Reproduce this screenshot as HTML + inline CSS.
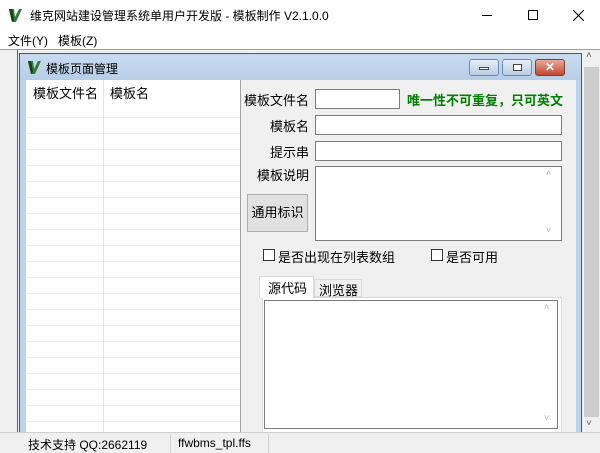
<!DOCTYPE html>
<html><head><meta charset="utf-8"><style>
*{margin:0;padding:0;box-sizing:border-box}
body{width:600px;height:453px;overflow:hidden;background:#fff;font-family:"Liberation Sans","Noto Sans CJK SC",sans-serif;font-size:12px;color:#000;position:relative}
.a{position:absolute}
.inp{position:absolute;background:#fff;border:1px solid #7a7a7a}
.lbl{position:absolute;width:70px;text-align:right;font-size:13px}
</style></head><body>
<div class="a" style="left:8px;top:8px;width:14px;height:14px">
<svg width="14" height="14"><polygon points="1,1 6,1 7,9 11,1 14,1 8,14 4,14" fill="#2e7d32"/><polygon points="1,1 4,1 6,12 4,14" fill="#1b3d1b"/></svg></div>
<div class="a" style="left:30px;top:7px;font-size:12px">维克网站建设管理系统单用户开发版 - 模板制作 V2.1.0.0</div>
<div class="a" style="left:482px;top:15px;width:10px;height:1px;background:#000"></div>
<div class="a" style="left:528px;top:10px;width:10px;height:10px;border:1px solid #000"></div>
<svg class="a" style="left:573px;top:10px" width="11" height="11"><path d="M0,0L11,11M11,0L0,11" stroke="#000" stroke-width="1"/></svg>
<div class="a" style="left:8px;top:32px">文件(Y)</div>
<div class="a" style="left:58px;top:32px">模板(Z)</div>
<div class="a" style="left:0;top:49px;width:600px;height:384px;background:#f0f0f0;border-top:1px solid #a0a0a0"></div>
<div class="a" style="left:17px;top:50px;width:1px;height:383px;background:#646464"></div>
<div class="a" style="left:583px;top:50px;width:17px;height:383px;background:#f0f0f0"></div>
<div class="a" style="left:584px;top:67px;width:15px;height:350px;background:#cdcdcd"></div>
<div class="a" style="left:586px;top:50px;font-size:10px;color:#606060">&#x2c4;</div>
<div class="a" style="left:586px;top:418px;font-size:10px;color:#606060">&#x2c5;</div>
<div class="a" style="left:19px;top:53px;width:563px;height:380px;background:#bcd2ea;border:1px solid #555"></div>
<div class="a" style="left:20px;top:54px;width:561px;height:26px;background:linear-gradient(#c9dbf0,#b7cde6)"></div>
<div class="a" style="left:27px;top:60px;width:14px;height:14px">
<svg width="14" height="14"><polygon points="1,1 6,1 7,9 11,1 14,1 8,14 4,14" fill="#2e7d32"/><polygon points="1,1 4,1 6,12 4,14" fill="#1b3d1b"/></svg></div>
<div class="a" style="left:46px;top:60px">模板页面管理</div>
<div class="a" style="left:469px;top:59px;width:30px;height:17px;border:1px solid #6d8bb0;border-radius:3px;background:linear-gradient(#e6eef8,#b9cde5)"><div class="a" style="left:9px;top:7px;width:10px;height:3px;border:1px solid #444;background:#fff"></div></div>
<div class="a" style="left:502px;top:59px;width:30px;height:17px;border:1px solid #6d8bb0;border-radius:3px;background:linear-gradient(#e6eef8,#b9cde5)"><div class="a" style="left:10px;top:4px;width:9px;height:7px;border:1px solid #444;background:#fff"></div></div>
<div class="a" style="left:535px;top:59px;width:30px;height:17px;border:1px solid #8b3a2f;border-radius:3px;background:linear-gradient(#e8a89a,#c4482f)"><div class="a" style="left:9px;top:0px;color:#fff;font-weight:bold;font-size:12px">✕</div></div>
<div class="a" style="left:26px;top:80px;width:550px;height:353px;background:#f0f0f0"></div>
<div class="a" style="left:26px;top:80px;width:215px;height:353px;background:#fff;border-right:1px solid #a0a0a0;
background-image:repeating-linear-gradient(to bottom,transparent 0,transparent 15px,#efefef 15px,#efefef 16px);background-position:0 6px"></div>
<div class="a" style="left:26px;top:80px;width:214px;height:22px;background:#fff"></div>
<div class="a" style="left:103px;top:80px;width:1px;height:353px;background:#e5e5e5"></div>
<div class="a" style="left:33px;top:83px;font-size:13px">模板文件名</div>
<div class="a" style="left:110px;top:83px;font-size:13px">模板名</div>
<div class="lbl" style="left:239px;top:90px">模板文件名</div>
<div class="inp" style="left:315px;top:89px;width:85px;height:20px"></div>
<div class="a" style="left:407px;top:90px;color:#008000;font-weight:bold;font-size:13px">唯一性不可重复，只可英文</div>
<div class="lbl" style="left:239px;top:116px">模板名</div>
<div class="inp" style="left:315px;top:115px;width:247px;height:20px"></div>
<div class="lbl" style="left:239px;top:142px">提示串</div>
<div class="inp" style="left:315px;top:141px;width:247px;height:20px"></div>
<div class="lbl" style="left:239px;top:165px">模板说明</div>
<div class="inp" style="left:315px;top:166px;width:247px;height:75px"></div>
<div class="a" style="left:546px;top:168px;font-size:9px;color:#bbb">&#x2c4;</div>
<div class="a" style="left:546px;top:225px;font-size:9px;color:#bbb">&#x2c5;</div>
<div class="a" style="left:247px;top:194px;width:61px;height:38px;background:#e1e1e1;border:1px solid #adadad;text-align:center;line-height:36px;font-size:13px">通用标识</div>
<div class="a" style="left:263px;top:249px;width:12px;height:12px;border:1px solid #333;background:#fff"></div>
<div class="a" style="left:278px;top:247px;font-size:13px">是否出现在列表数组</div>
<div class="a" style="left:431px;top:249px;width:12px;height:12px;border:1px solid #333;background:#fff"></div>
<div class="a" style="left:446px;top:247px;font-size:13px">是否可用</div>
<div class="a" style="left:262px;top:297px;width:300px;height:136px;background:#fff;border:1px solid #d9d9d9"></div>
<div class="a" style="left:259px;top:276px;width:55px;height:22px;background:#fff;border:1px solid #d9d9d9;border-bottom:none;padding:1px 0 0 8px;font-size:13px">源代码</div>
<div class="a" style="left:314px;top:279px;width:48px;height:18px;background:#f0f0f0;border:1px solid #d9d9d9;padding:0 0 0 4px;font-size:13px">浏览器</div>
<div class="inp" style="left:264px;top:300px;width:294px;height:129px"></div>
<div class="a" style="left:544px;top:302px;font-size:9px;color:#bbb">&#x2c4;</div>
<div class="a" style="left:544px;top:413px;font-size:9px;color:#bbb">&#x2c5;</div>
<div class="a" style="left:576px;top:80px;width:4px;height:353px;background:#bcd2ea"></div>
<div class="a" style="left:0;top:432px;width:600px;height:21px;background:#f0f0f0;border-top:1px solid #d0d0d0"></div>
<div class="a" style="left:28px;top:436px">技术支持 QQ:2662119</div>
<div class="a" style="left:170px;top:434px;width:1px;height:19px;background:#d0d0d0"></div>
<div class="a" style="left:178px;top:436px">ffwbms_tpl.ffs</div>
<div class="a" style="left:268px;top:434px;width:1px;height:19px;background:#d0d0d0"></div>
</body></html>
